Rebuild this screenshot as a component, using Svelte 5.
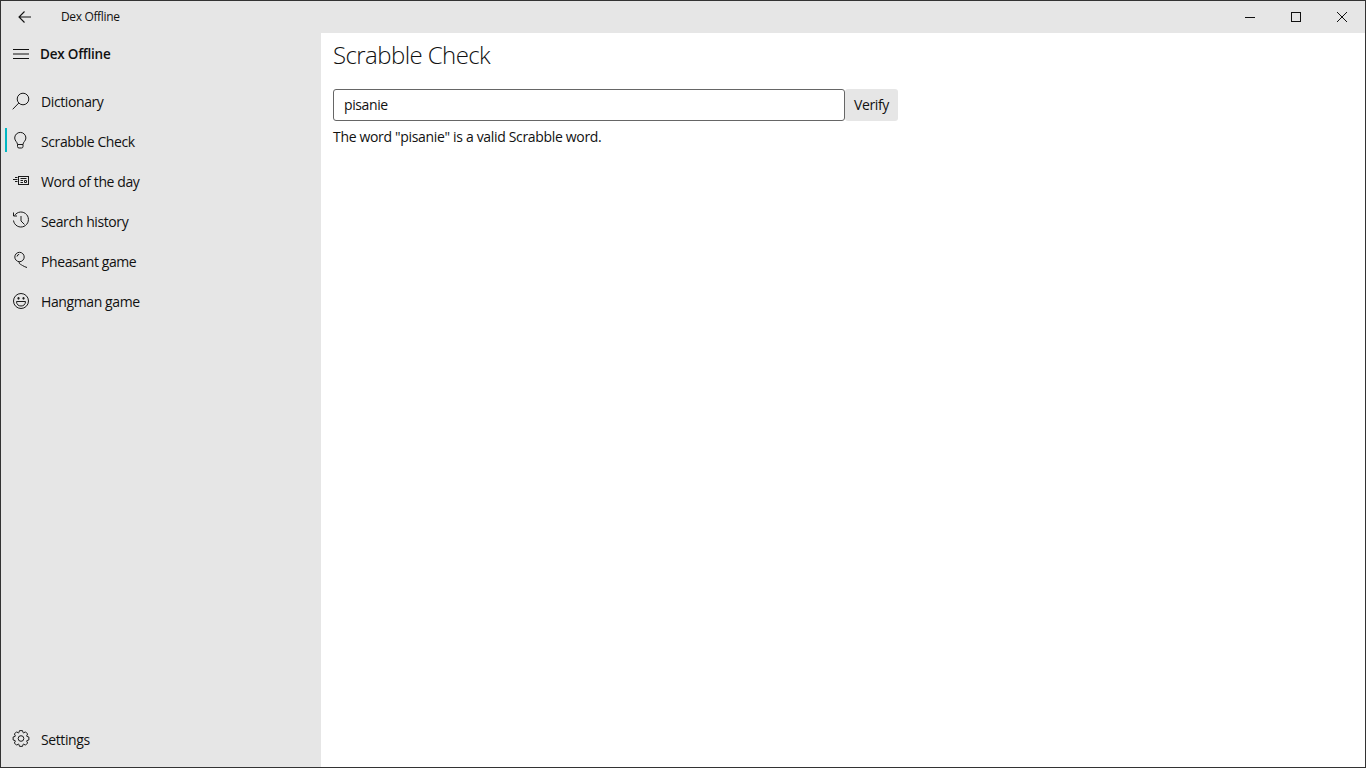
<script>
  let word = $state('pisanie');

  const navItems = [
    { id: 'dictionary', label: 'Dictionary' },
    { id: 'scrabble', label: 'Scrabble Check' },
    { id: 'wotd', label: 'Word of the day' },
    { id: 'history', label: 'Search history' },
    { id: 'pheasant', label: 'Pheasant game' },
    { id: 'hangman', label: 'Hangman game' },
  ];
  let active = $state('scrabble');

  // eight-toothed cog outline, centred on 10,9.5
  function gearPath(cx, cy, outer, inner) {
    const pts = [];
    const teeth = 8;
    for (let i = 0; i < teeth; i++) {
      const a = (i / teeth) * Math.PI * 2;
      const step = Math.PI / teeth;
      [[-0.95, inner], [-0.5, outer], [0.5, outer], [0.95, inner]].forEach(([k, r]) => {
        const t = a + k * step * 0.95;
        pts.push(`${(cx + Math.cos(t) * r).toFixed(2)} ${(cy + Math.sin(t) * r).toFixed(2)}`);
      });
    }
    return 'M' + pts.join(' L') + ' Z';
  }
</script>

{#snippet icon(id)}
  <svg class="icon" width="20" height="20" viewBox="0 0 20 20" fill="none" stroke="#1a1a1a" stroke-width="1">
    {#if id === 'dictionary'}
      <circle cx="12" cy="8" r="5.800" />
      <path d="M7.800 12 L1.700 18.300" />
    {:else if id === 'scrabble'}
      <path d="M6.500 13.500 C6.500 11 3.700 10 3.700 7 a5.600 5.600 0 0 1 11.200 0 C14.900 10 12 11 12 13.500 Z" />
      <path d="M6.500 13.500 V15.500 a1.500 1.500 0 0 0 1.500 1.500 h2.500 a1.500 1.500 0 0 0 1.500 -1.500 V13.500" />
    {:else if id === 'wotd'}
      <rect x="7.500" y="5.500" width="10" height="8" />
      <path d="M9.500 7.500 h6 M9.500 9.500 h2.500 M9.500 11.500 h2.500 M13.500 9.500 h2 v2 h-2 z" />
      <path d="M4 6.500 h2.500 M2 8.500 h4.500 M4 10.500 h2.500" />
    {:else if id === 'history'}
      <path d="M3.600 4.500 A7.500 7.500 0 1 1 2.500 9.500" />
      <path d="M2.500 1.500 V5 H6" />
      <path d="M10 5 V10 L13.500 13.500" />
    {:else if id === 'pheasant'}
      <circle cx="8.500" cy="6" r="4.700" />
      <path d="M6 5.500 a2.700 2.700 0 0 1 2.200 -2.200" />
      <path d="M8.500 10.700 L8 12 C8.500 13 10 13.500 11.500 14.500 C13 15.500 14.500 16 16 16.500" />
    {:else if id === 'hangman'}
      <circle cx="10" cy="10" r="7.500" />
      <ellipse cx="7.500" cy="7.300" rx="1" ry="1.400" fill="#1a1a1a" stroke="none" />
      <ellipse cx="12.500" cy="7.300" rx="1" ry="1.400" fill="#1a1a1a" stroke="none" />
      <path d="M5.500 10.500 H14.500 C14.500 13.500 12.500 15 10 15 C7.500 15 5.500 13.500 5.500 10.500 Z" />
    {:else if id === 'settings'}
      <path d={gearPath(10, 9.500, 8, 6.200)} />
      <circle cx="10" cy="9.500" r="2.800" />
    {/if}
  </svg>
{/snippet}

<div class="window">
  <header class="titlebar">
    <button class="back" aria-label="Back">
      <svg width="16" height="16" viewBox="0 0 16 16" fill="none" stroke="#111" stroke-width="1.100">
        <path d="M14 8 H2 M7.500 2.500 L2 8 L7.500 13.500" />
      </svg>
    </button>
    <span class="app-title">Dex Offline</span>
    <div class="caption">
      <button aria-label="Minimize">
        <svg width="12" height="12" viewBox="0 0 12 12" stroke="#111"><path d="M1 6.500 H11" /></svg>
      </button>
      <button aria-label="Maximize">
        <svg width="12" height="12" viewBox="0 0 12 12" fill="none" stroke="#111"><rect x="1.500" y="1.500" width="9" height="9" /></svg>
      </button>
      <button aria-label="Close">
        <svg width="12" height="12" viewBox="0 0 12 12" stroke="#111"><path d="M1 1 L11 11 M11 1 L1 11" /></svg>
      </button>
    </div>
  </header>

  <div class="body">
    <aside class="sidebar">
      <div class="pane-head">
        <svg class="burger" width="16" height="10" viewBox="0 0 16 10" stroke="#111"><path d="M0 .5 H16 M0 5 H16 M0 9.500 H16" /></svg>
        <span class="pane-title">Dex Offline</span>
      </div>
      <nav>
        {#each navItems as item}
          <button class="nav-item" class:active={active === item.id} onclick={() => (active = item.id)}>
            {@render icon(item.id)}
            <span>{item.label}</span>
          </button>
        {/each}
      </nav>
      <button class="nav-item settings">
        {@render icon('settings')}
        <span>Settings</span>
      </button>
    </aside>

    <main class="content">
      <h1>Scrabble Check</h1>
      <div class="check-row">
        <input bind:value={word} />
        <button class="verify">Verify</button>
      </div>
      <p class="result">The word "{word}" is a valid Scrabble word.</p>
    </main>
  </div>
</div>

<style>
  :global(body) {
    margin: 0;
    background: #fff;
  }

  .window {
    height: 768px;
    box-sizing: border-box;
    border: 1px solid #333;
    display: flex;
    flex-direction: column;
    font-family: "Open Sans", "Noto Sans", sans-serif;
    font-size: 14px;
    color: #111;
    overflow: hidden;
  }

  button {
    font: inherit;
    color: inherit;
    border: none;
    background: none;
    padding: 0;
  }

  .titlebar {
    height: 32px;
    flex: none;
    background: #e6e6e6;
    display: flex;
    align-items: center;
  }

  .back {
    width: 48px;
    height: 32px;
    display: flex;
    align-items: center;
    justify-content: center;
  }

  .app-title {
    margin-left: 12px;
    padding-bottom: 2px;
    font-size: 12px;
    letter-spacing: -0.35px;
  }

  .caption {
    margin-left: auto;
    display: flex;
  }

  .caption button {
    width: 46px;
    height: 32px;
    display: flex;
    align-items: center;
    justify-content: center;
  }

  .body {
    flex: 1;
    display: flex;
    min-height: 0;
  }

  .sidebar {
    width: 320px;
    flex: none;
    background: #e6e6e6;
    display: flex;
    flex-direction: column;
  }

  .pane-head {
    height: 42px;
    display: flex;
    align-items: center;
    padding-left: 12px;
    box-sizing: border-box;
  }

  .pane-title {
    margin-left: 11px;
    font-weight: 600;
    font-size: 13.5px;
    letter-spacing: -0.22px;
  }

  nav {
    margin-top: 6px;
    display: flex;
    flex-direction: column;
  }

  .nav-item {
    position: relative;
    height: 40px;
    display: flex;
    align-items: center;
    padding-left: 10px;
    text-align: left;
    letter-spacing: -0.4px;
    font-size: 14px;
    width: 100%;
  }

  .nav-item .icon {
    margin-right: 10px;
    flex: none;
  }

  .nav-item.active::before {
    content: "";
    position: absolute;
    left: 4px;
    top: 7px;
    width: 2px;
    height: 24px;
    background: #00b7c3;
  }

  .settings {
    margin-top: auto;
    margin-bottom: 8px;
  }

  .content {
    flex: 1;
    background: #fff;
    padding: 0 12px;
  }

  h1 {
    margin: 4px 0 0;
    font-size: 24px;
    font-weight: 300;
    line-height: 36px;
    letter-spacing: -0.58px;
  }

  .check-row {
    margin-top: 16px;
    display: flex;
  }

  input {
    width: 512px;
    height: 32px;
    box-sizing: border-box;
    border: 1px solid #666;
    border-radius: 3px;
    padding: 0 10px 1px;
    font: inherit;
    letter-spacing: -0.4px;
    color: #111;
    outline: none;
  }

  .verify {
    width: 53px;
    height: 32px;
    padding-bottom: 1px;
    background: #e6e6e6;
    border-radius: 3px;
    letter-spacing: -0.4px;
  }

  .result {
    margin: 6px 0 0;
    line-height: 20px;
    letter-spacing: -0.33px;
  }
</style>
